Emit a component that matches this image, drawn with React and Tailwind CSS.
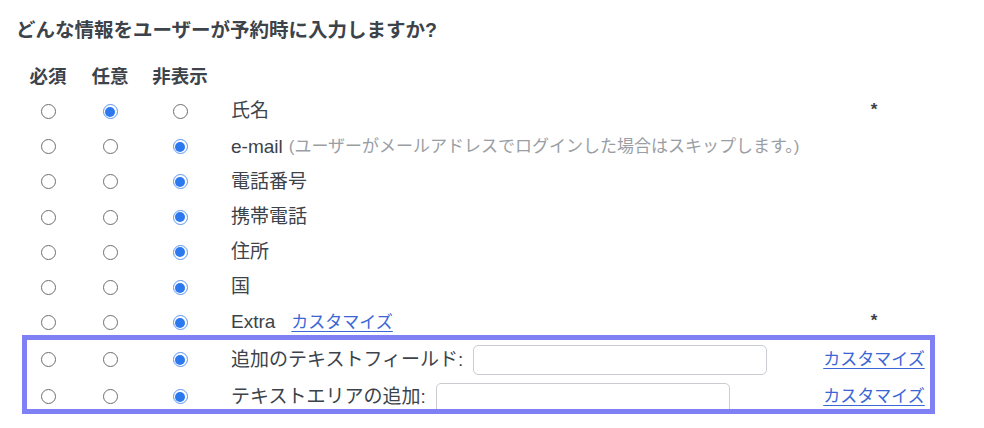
const FONT = { fontFamily: '"Liberation Sans", "Noto Sans CJK JP", sans-serif' }

const rows = [
  { label: '氏名', pick: 1, star: true },
  { label: 'e-mail', note: '(ユーザーがメールアドレスでログインした場合はスキップします。)', pick: 2 },
  { label: '電話番号', pick: 2 },
  { label: '携帯電話', pick: 2 },
  { label: '住所', pick: 2 },
  { label: '国', pick: 2 },
  { label: 'Extra', link: true, pick: 2, star: true },
]

function Radio({ on }) {
  if (on) {
    return (
      <span className="w-[15px] h-[15px] rounded-full border-[1.5px] border-[#5a96f2] p-[1.5px] flex">
        <span className="flex-1 rounded-full bg-[#2c78ef]" />
      </span>
    )
  }
  return <span className="w-[15px] h-[15px] rounded-full border border-[#6f6f6f] bg-white" />
}

function Radios({ pick, first = 'w-[64px] justify-center' }) {
  return (
    <>
      <div className={`${first} flex shrink-0`}>
        <Radio on={pick === 0} />
      </div>
      <div className="w-[60px] shrink-0 flex justify-center">
        <Radio on={pick === 1} />
      </div>
      <div className="w-[80px] shrink-0 flex justify-center">
        <Radio on={pick === 2} />
      </div>
    </>
  )
}

function Customize() {
  return <a className="text-[17px] text-[#3b66d6] underline underline-offset-[3px] cursor-pointer">カスタマイズ</a>
}

// inside the highlight box the content starts at x=27, so the first column is narrower
const BOXED = 'w-[53px] pl-[13.5px]'

export default function App() {
  return (
    <div className="bg-white w-[984px] h-[428px] overflow-hidden text-[#3c434a]" style={FONT}>
      <h2 className="pl-[16px] pt-[18px] h-[59px] text-[19.5px] font-bold leading-[24px]">
        どんな情報をユーザーが予約時に入力しますか?
      </h2>

      {/* header */}
      <div className="flex items-center h-[35px] pl-[16px] text-[18.5px] font-bold">
        <div className="w-[64px] text-center">必須</div>
        <div className="w-[60px] text-center">任意</div>
        <div className="w-[80px] text-center">非表示</div>
      </div>

      {rows.map((r) => (
        <div key={r.label} className="flex items-center h-[35.2px] pl-[16px] w-[928px]">
          <Radios pick={r.pick} />
          <div className="flex-1 pl-[11px] text-[19px] flex items-center">
            <span>{r.label}</span>
            {r.note && <span className="ml-[6px] text-[17px] text-[#9a9ea4]">{r.note}</span>}
            {r.link && (
              <span className="ml-[16px]">
                <Customize />
              </span>
            )}
          </div>
          <div className="w-[108px] text-center text-[17px] font-bold -mt-[4px]">{r.star ? '*' : ''}</div>
        </div>
      ))}

      {/* highlighted custom fields */}
      <div className="ml-[22px] -mt-[5.4px] w-[913px] h-[79px] border-[5px] border-[#8080f5] overflow-hidden">
        <div className="flex items-center h-[40px] pr-[2px]">
          <Radios pick={2} first={BOXED} />
          <div className="flex-1 pl-[11px] text-[19px] flex items-center">
            <span>追加のテキストフィールド:</span>
            <input className="ml-[10px] w-[294px] h-[30px] border border-[#c9ccd1] rounded-[5px] bg-white" />
          </div>
          <div className="w-[108px] text-center">
            <Customize />
          </div>
        </div>
        <div className="flex items-start h-[34px] pr-[2px]">
          <div className="flex items-center h-[34px]">
            <Radios pick={2} first={BOXED} />
          </div>
          <div className="flex-1 pl-[11px] text-[19px] flex items-start">
            <span className="h-[34px] flex items-center">テキストエリアの追加:</span>
            <textarea className="ml-[10px] mt-[3px] w-[294px] h-[44px] border border-[#c9ccd1] rounded-[5px] bg-white resize-none" />
          </div>
          <div className="w-[108px] h-[34px] flex items-center justify-center">
            <Customize />
          </div>
        </div>
      </div>
    </div>
  )
}
